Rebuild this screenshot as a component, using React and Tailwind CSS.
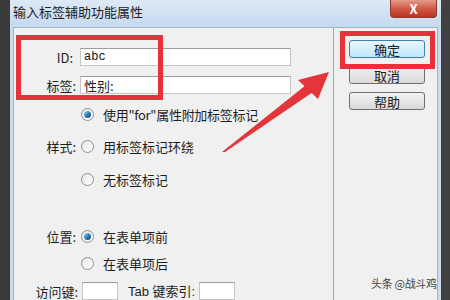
import React from "react";

const font = { fontFamily: '"Noto Sans CJK SC", "Noto Sans", sans-serif' };

const Radio = ({ checked }) => (
  <div className="w-[13px] h-[13px] rounded-full border border-[#8f8f8f] bg-gradient-to-br from-[#e6e6e6] to-[#ffffff] flex items-center justify-center shrink-0">
    {checked && (
      <div className="w-[7px] h-[7px] rounded-full bg-gradient-to-br from-[#a8d8ef] via-[#2f7fb3] to-[#0c4d7a]" />
    )}
  </div>
);

const Field = ({ children, className = "" }) => (
  <div
    className={`h-[18px] bg-white border border-[#c5c5c5] border-t-[#9c9c9c] flex items-center px-[3px] ${className}`}
  >
    {children}
  </div>
);

const Btn = ({ children, primary }) => (
  <div
    className={`w-[76px] h-[18px] rounded-[3px] border flex items-center justify-center text-[13px] leading-none text-[#1a1a1a] ${
      primary
        ? "border-[#3c7fb1] bg-gradient-to-b from-[#eaf6fd] to-[#bee6fd]"
        : "border-[#707070] bg-gradient-to-b from-[#f2f2f2] to-[#d9d9d9]"
    }`}
  >
    {children}
  </div>
);

export default function App() {
  return (
    <div
      className="relative w-[450px] h-[300px] overflow-hidden flex bg-[#3b3b3b] text-[#1e1e1e]"
      style={font}
    >
      <div className="w-[10px] bg-[#3a3a3a]" />

      {/* dialog */}
      <div className="w-[431px] flex flex-col bg-[#c8dbef]">
        {/* title bar */}
        <div className="h-[27px] shrink-0 flex items-start justify-between bg-gradient-to-b from-[#dde9f6] to-[#c6d9ee]">
          <span className="pl-[3px] pt-[5px] text-[13px] leading-none text-[#222]">
            输入标签辅助功能属性
          </span>
          <div className="mr-[4px] w-[47px] h-[18px] rounded-b-[4px] border border-[#8a3a2e] border-t-0 bg-gradient-to-b from-[#e59a8a] via-[#cf5a46] to-[#b9331f] flex items-center justify-center text-white text-[13px] font-bold leading-none">
            X
          </div>
        </div>

        {/* client area */}
        <div className="flex-1 mx-[3px] flex bg-[#f0f0f0] border-t border-l border-r border-[#9fb3c9]">
          {/* left form */}
          <div className="w-[320px] border-r border-[#a8a8a8] pt-[20px] text-[13px] leading-none">
            <div className="flex items-center h-[18px]">
              <span className="w-[59px] text-right">ID:</span>
              <Field className="ml-[7px] w-[211px]">
                <span className="text-[12px] font-['Liberation_Mono',monospace] text-[#111]">abc</span>
              </Field>
            </div>
            <div className="flex items-center h-[18px] mt-[10px]">
              <span className="w-[62px] text-right">标签:</span>
              <Field className="ml-[4px] w-[211px]">
                <span className="text-[13px]">性别:</span>
              </Field>
            </div>

            <div className="flex items-center h-[18px] mt-[11px] pl-[67px] gap-[9px]">
              <Radio checked />
              <span className="tracking-[-0.3px]">使用"for"属性附加标签标记</span>
            </div>
            <div className="flex items-center h-[18px] mt-[14px]">
              <span className="w-[62px] text-right">样式:</span>
              <div className="ml-[5px] flex items-center gap-[9px]">
                <Radio />
                <span>用标签标记环绕</span>
              </div>
            </div>
            <div className="flex items-center h-[18px] mt-[15px] pl-[67px] gap-[9px]">
              <Radio />
              <span>无标签标记</span>
            </div>

            <div className="flex items-center h-[18px] mt-[39px]">
              <span className="w-[62px] text-right">位置:</span>
              <div className="ml-[5px] flex items-center gap-[9px]">
                <Radio checked />
                <span>在表单项前</span>
              </div>
            </div>
            <div className="flex items-center h-[18px] mt-[9px] pl-[67px] gap-[9px]">
              <Radio />
              <span>在表单项后</span>
            </div>

            <div className="flex items-center h-[18px] mt-[10px]">
              <span className="w-[64px] text-right">访问键:</span>
              <Field className="ml-[4px] w-[36px]" />
              <span className="ml-[10px] font-['Liberation_Sans','Noto_Sans_CJK_SC',sans-serif]">Tab 键索引:</span>
              <Field className="ml-[4px] w-[36px]" />
            </div>
          </div>

          {/* buttons */}
          <div className="flex-1 pl-[15px] pt-[12px] flex flex-col gap-[8px]">
            <Btn primary>确定</Btn>
            <Btn>取消</Btn>
            <Btn>帮助</Btn>
          </div>
        </div>
      </div>

      <div className="flex-1 bg-[#404040]" />

      {/* red highlight boxes */}
      <div className="absolute left-[16px] top-[35px] w-[147px] h-[65px] border-[5px] border-[#e6323b]" />
      <div className="absolute left-[340px] top-[31px] w-[95px] h-[38px] border-[5px] border-[#e6323b]" />

      {/* red arrow */}
      <svg className="absolute left-0 top-0" width="450" height="300">
        <polygon points="222,152 225,152 313,92 306,85" fill="#e3353a" />
        <polygon points="329,72 298,80 318,99" fill="#e3353a" />
      </svg>

      {/* watermark */}
      <span className="absolute left-[371px] top-[278px] text-[11px] leading-none text-[#444] tracking-[-0.3px]">
        头条 @战斗鸡
      </span>
    </div>
  );
}
